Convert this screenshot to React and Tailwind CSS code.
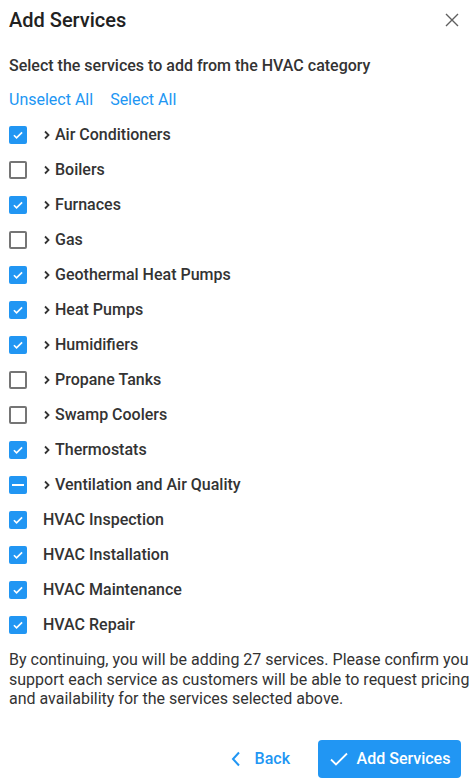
import React from "react";

const items = [
  { label: "Air Conditioners", state: "checked", expand: true },
  { label: "Boilers", state: "unchecked", expand: true },
  { label: "Furnaces", state: "checked", expand: true },
  { label: "Gas", state: "unchecked", expand: true },
  { label: "Geothermal Heat Pumps", state: "checked", expand: true },
  { label: "Heat Pumps", state: "checked", expand: true },
  { label: "Humidifiers", state: "checked", expand: true },
  { label: "Propane Tanks", state: "unchecked", expand: true },
  { label: "Swamp Coolers", state: "unchecked", expand: true },
  { label: "Thermostats", state: "checked", expand: true },
  { label: "Ventilation and Air Quality", state: "indeterminate", expand: true },
  { label: "HVAC Inspection", state: "checked", expand: false },
  { label: "HVAC Installation", state: "checked", expand: false },
  { label: "HVAC Maintenance", state: "checked", expand: false },
  { label: "HVAC Repair", state: "checked", expand: false },
];

function Box({ state }) {
  if (state === "unchecked") {
    return <div className="w-[18px] h-[18px] rounded-[2px] border-2 border-[#757575] bg-white" />;
  }
  return (
    <div className="w-[18px] h-[18px] rounded-[2px] bg-[#2196f3] flex items-center justify-center">
      {state === "checked" ? (
        <svg width="14" height="14" viewBox="0 0 24 24">
          <path d="M5 12.5l4.5 4.5L19 7.5" fill="none" stroke="white" strokeWidth="2.8" />
        </svg>
      ) : (
        <div className="w-[12px] h-[2px] bg-white" />
      )}
    </div>
  );
}

export default function App() {
  return (
    <div className="w-[469px] h-[781px] bg-white overflow-hidden text-[#333] font-['Roboto',sans-serif]">
      <div className="flex items-center justify-between pl-[9px] pr-[10px] h-[40px]">
        <h1 className="text-[20px] font-medium text-[#212121]">Add Services</h1>
        <svg width="14" height="14" viewBox="0 0 14 14">
          <path d="M1 1L13 13M13 1L1 13" stroke="#5f5f5f" strokeWidth="1.4" />
        </svg>
      </div>
      <div className="pl-[9px]">
        <p className="mt-[14px] text-[16px] font-medium leading-[24px]">Select the services to add from the HVAC category</p>
        <div className="flex gap-[17px] mt-[10px] text-[16px] text-[#2196f3] leading-[24px]">
          <span>Unselect All</span>
          <span>Select All</span>
        </div>
        <div className="mt-[5px] flex flex-col">
          {items.map((it) => (
            <div key={it.label} className="flex items-center h-[35px]">
              <Box state={it.state} />
              <div className="flex items-center ml-[16px]">
                {it.expand && (
                  <svg width="8" height="10" viewBox="0 0 8 10" className="mr-[4px]">
                    <path d="M2 1.5L5.5 5L2 8.5" fill="none" stroke="#333" strokeWidth="1.8" />
                  </svg>
                )}
                <span className="text-[16px] font-medium">{it.label}</span>
              </div>
            </div>
          ))}
        </div>
        <p className="mt-[8px] text-[16px] leading-[19.5px] whitespace-nowrap">
          By continuing, you will be adding 27 services. Please confirm you
          <br />
          support each service as customers will be able to request pricing
          <br />
          and availability for the services selected above.
        </p>
      </div>
      <div className="flex justify-end items-center mt-[31px] pr-[8px] gap-[28px]">
        <div className="flex items-center gap-[14px] text-[#2196f3] text-[16px] font-medium">
          <svg width="10" height="16" viewBox="0 0 10 16">
            <path d="M8 1.5L2 8l6 6.5" fill="none" stroke="#2196f3" strokeWidth="2" />
          </svg>
          <span>Back</span>
        </div>
        <div className="flex items-center gap-[8px] bg-[#2196f3] text-white rounded-[4px] h-[38px] w-[143px] justify-center text-[16px] font-medium">
          <svg width="20" height="16" viewBox="0 0 20 16">
            <path d="M2 8.5l5 5L18 2.5" fill="none" stroke="white" strokeWidth="1.8" />
          </svg>
          <span>Add Services</span>
        </div>
      </div>
    </div>
  );
}
